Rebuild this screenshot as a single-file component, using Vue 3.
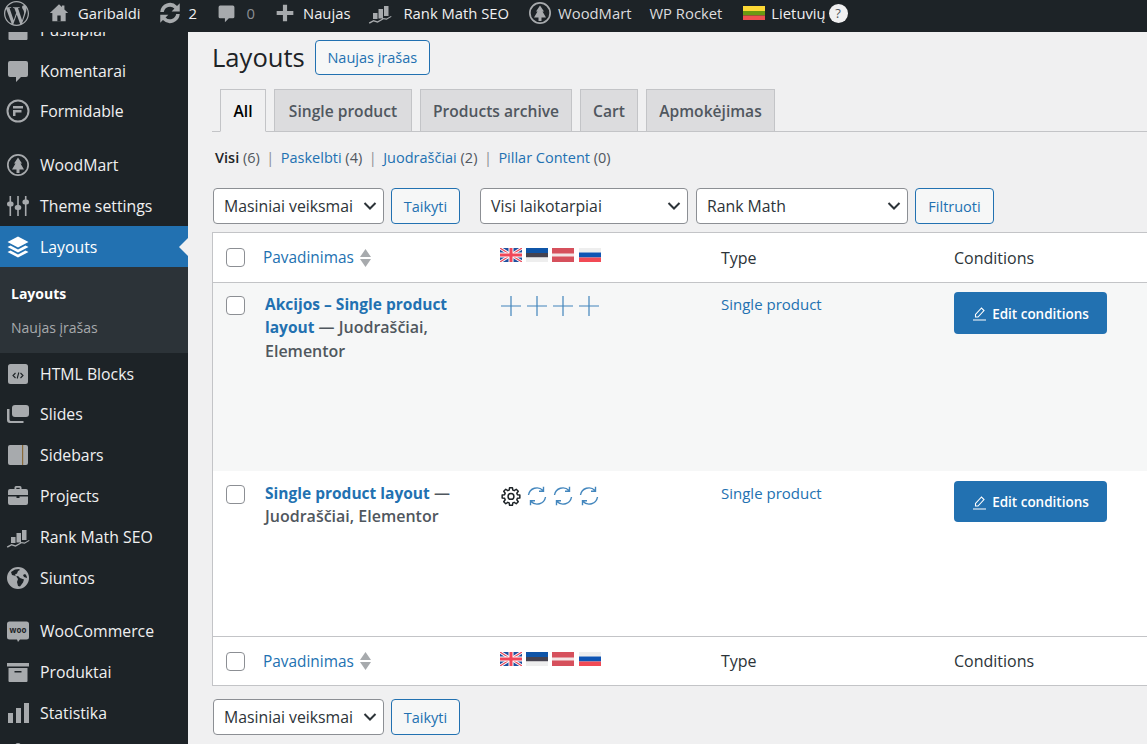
<template>
  <div class="page">
    <header class="topbar">
      <div class="bar-item logo">
        <svg class="bar-icon" width="25" height="25" viewBox="0 0 24 24"><path :d="icons.wp" /></svg>
      </div>
      <div v-for="item in barItems" :key="item.key" class="bar-item" :style="{ marginLeft: item.gap + 'px' }">
        <svg v-if="item.icon" class="bar-icon" :width="item.size" :height="item.size" viewBox="0 0 24 24">
          <path fill-rule="evenodd" :d="icons[item.icon]" />
          <path v-if="item.icon === 'home'" d="M10 15h4v7h-4z" class="door" />
        </svg>
        <span v-if="item.text" class="bar-text" :class="item.tone" :style="{ marginLeft: item.textGap + 'px' }">{{ item.text }}</span>
      </div>
      <svg class="lt-flag" width="22" height="14" viewBox="0 0 22 14">
        <rect width="22" height="5" fill="#fdd835" /><rect y="5" width="22" height="4.5" fill="#6a9a12" /><rect y="9.5" width="22" height="4.5" fill="#ef4f4f" />
      </svg>
      <span class="bar-text lang">Lietuvių</span>
      <span class="help">?</span>
    </header>

    <div class="shell">
      <nav class="sidebar">
        <div class="menu">
          <template v-for="item in menu" :key="item.icon + item.label">
            <div class="menu-item" :class="{ active: item.active, spaced: item.spaced }">
              <svg class="menu-icon" width="24" height="24" viewBox="0 0 24 24">
                <path fill-rule="evenodd" :d="icons[item.icon]" />
                <path v-if="item.icon === 'sidebars'" d="M16 2h1.200v20H16z" fill="#8a6a3a" />
                <path v-if="item.icon === 'html'" d="M9.500 11 7 13.500 9.500 16M14.500 11l2.500 2.500L14.500 16M12.800 10.500l-1.600 6" class="code" />
                <text v-if="item.icon === 'woo'" x="12" y="13.500" class="woo">woo</text>
              </svg>
              <span>{{ item.label }}</span>
            </div>
            <div v-if="item.active" class="submenu">
              <div class="sub current">Layouts</div>
              <div class="sub">Naujas įrašas</div>
            </div>
          </template>
        </div>
      </nav>

      <main class="content">
        <div class="title-row">
          <h1>Layouts</h1>
          <span class="add-new">Naujas įrašas</span>
        </div>

        <div class="tabs">
          <span v-for="tab in tabs" :key="tab.label" class="tab" :class="{ on: tab.label === 'All' }" :style="{ width: tab.width + 'px' }">{{ tab.label }}</span>
        </div>

        <div class="views">
          <span class="view strong">Visi <i>(6)</i></span><b>|</b>
          <span class="view"><a>Paskelbti</a> <i>(4)</i></span><b>|</b>
          <span class="view"><a>Juodraščiai</a> <i>(2)</i></span><b>|</b>
          <span class="view"><a>Pillar Content</a> <i>(0)</i></span>
        </div>

        <div class="filters">
          <div class="select w171"><span>Masiniai veiksmai</span><svg width="14" height="8" viewBox="0 0 14 8"><path d="M1.500 1 7 6.500 12.500 1" /></svg></div>
          <span class="btn w69">Taikyti</span>
          <div class="select w208"><span>Visi laikotarpiai</span><svg width="14" height="8" viewBox="0 0 14 8"><path d="M1.500 1 7 6.500 12.500 1" /></svg></div>
          <div class="select w212"><span>Rank Math</span><svg width="14" height="8" viewBox="0 0 14 8"><path d="M1.500 1 7 6.500 12.500 1" /></svg></div>
          <span class="btn w79">Filtruoti</span>
        </div>

        <div class="table">
          <div class="row head">
            <input type="checkbox" class="check" />
            <div class="sort"><a>Pavadinimas</a><svg width="11" height="18" viewBox="0 0 11 18"><path d="M5.500 0 11 8H0zM0 10h11l-5.500 8z" /></svg></div>
            <div class="flags">
              <svg v-for="f in flags" :key="f" class="flag" width="22" height="14" viewBox="0 0 22 14"><use :href="'#flag-' + f" /></svg>
            </div>
            <div class="col">Type</div>
            <div class="col">Conditions</div>
          </div>

          <div class="row body alt">
            <input type="checkbox" class="check" />
            <div class="name"><a>Akcijos – Single product layout</a> — Juodraščiai, Elementor</div>
            <div class="status">
              <svg v-for="f in flags" :key="f" width="20" height="20" viewBox="0 0 20 20"><path d="M10 0v20M0 10h20" class="line" /></svg>
            </div>
            <a class="type">Single product</a>
            <div><span class="edit"><svg width="15" height="15" viewBox="0 0 15 15"><path d="M1 14h13M3.500 11V8.500l6-6.500 2.500 2.500-6 6.500z" /></svg>Edit conditions</span></div>
          </div>

          <div class="row body second">
            <input type="checkbox" class="check" />
            <div class="name"><a>Single product layout</a> — Juodraščiai, Elementor</div>
            <div class="status">
              <svg width="20" height="20" viewBox="0 0 24 24"><path d="M10.300 2h3.400l.5 2.900 1.700.7 2.400-1.700 2.400 2.400-1.700 2.400.7 1.700 2.900.5v3.400l-2.900.5-.7 1.700 1.700 2.400-2.400 2.400-2.400-1.700-1.700.7-.5 2.900h-3.400l-.5-2.900-1.700-.7-2.400 1.700-2.400-2.400 1.700-2.400-.7-1.700-2.900-.5v-3.400l2.900-.5.7-1.700-1.700-2.400 2.400-2.400 2.400 1.700 1.700-.7z" class="gear" /><circle cx="12" cy="12.500" r="3.500" class="gear" /></svg>
              <svg v-for="n in 3" :key="n" width="20" height="20" viewBox="0 0 20 20"><path d="M1.500 9A8.500 8.500 0 0 1 16 4.500M18.500 11A8.500 8.500 0 0 1 4 15.500M16.500 .8V5.300H12M3.500 19.200V14.700H8" class="line thin" /></svg>
            </div>
            <a class="type">Single product</a>
            <div><span class="edit"><svg width="15" height="15" viewBox="0 0 15 15"><path d="M1 14h13M3.500 11V8.500l6-6.500 2.500 2.500-6 6.500z" /></svg>Edit conditions</span></div>
          </div>

          <div class="row foot">
            <input type="checkbox" class="check" />
            <div class="sort"><a>Pavadinimas</a><svg width="11" height="18" viewBox="0 0 11 18"><path d="M5.500 0 11 8H0zM0 10h11l-5.500 8z" /></svg></div>
            <div class="flags">
              <svg v-for="f in flags" :key="f" class="flag" width="22" height="14" viewBox="0 0 22 14"><use :href="'#flag-' + f" /></svg>
            </div>
            <div class="col">Type</div>
            <div class="col">Conditions</div>
          </div>
        </div>

        <div class="filters bottom">
          <div class="select w171"><span>Masiniai veiksmai</span><svg width="14" height="8" viewBox="0 0 14 8"><path d="M1.500 1 7 6.500 12.500 1" /></svg></div>
          <span class="btn w69">Taikyti</span>
        </div>
      </main>
    </div>

    <svg class="defs" width="0" height="0">
      <defs>
        <g id="flag-en">
          <rect width="22" height="14" fill="#1f4f9e" />
          <path d="M0 0l22 14M22 0 0 14" stroke="#fff" stroke-width="3" />
          <path d="M0 0l22 14M22 0 0 14" stroke="#e8475a" stroke-width="1.200" />
          <path d="M11 0v14M0 7h22" stroke="#fff" stroke-width="5" />
          <path d="M11 0v14M0 7h22" stroke="#f0475a" stroke-width="3" />
        </g>
        <g id="flag-ee">
          <rect width="22" height="5" fill="#0f55a8" /><rect y="5" width="22" height="4.500" fill="#46434f" /><rect y="9.500" width="22" height="4.500" fill="#eeeeee" />
        </g>
        <g id="flag-lv">
          <rect width="22" height="14" fill="#d6505c" /><rect y="5.500" width="22" height="3" fill="#f3e6e6" />
        </g>
        <g id="flag-ru">
          <rect width="22" height="4.500" fill="#eeeeee" /><rect y="4.500" width="22" height="5" fill="#0f55b4" /><rect y="9.500" width="22" height="4.500" fill="#f24a55" />
        </g>
      </defs>
    </svg>
  </div>
</template>

<script setup>
const icons = {
  wp: 'M21.469 6.825c.84 1.537 1.318 3.3 1.318 5.175 0 3.979-2.156 7.456-5.363 9.325l3.295-9.527c.615-1.54.82-2.771.82-3.864 0-.405-.026-.78-.07-1.11m-7.981.105c.647-.03 1.232-.105 1.232-.105.582-.075.514-.93-.067-.899 0 0-1.755.135-2.88.135-1.064 0-2.85-.15-2.85-.15-.585-.03-.661.855-.075.885 0 0 .54.061 1.125.09l1.68 4.605-2.37 7.08L5.354 6.9c.649-.03 1.234-.1 1.234-.1.585-.075.516-.93-.065-.896 0 0-1.746.138-2.874.138-.2 0-.438-.008-.69-.015C4.911 3.15 8.235 1.215 12 1.215c2.809 0 5.365 1.072 7.286 2.833-.046-.003-.091-.009-.141-.009-1.06 0-1.812.923-1.812 1.914 0 .89.513 1.643 1.06 2.531.411.72.89 1.643.89 2.977 0 .915-.354 1.994-.821 3.479l-1.075 3.585-3.9-11.61.001.014zM12 22.784c-1.059 0-2.081-.153-3.048-.437l3.237-9.406 3.315 9.087c.024.053.05.101.078.149-1.12.393-2.325.609-3.582.609M1.211 12c0-1.564.336-3.05.935-4.39L7.29 21.709C3.694 19.96 1.212 16.271 1.211 12M12 0C5.385 0 0 5.385 0 12s5.385 12 12 12 12-5.385 12-12S18.615 0 12 0',
  home: 'M12 1.500 1 12h3v10h16V12h3l-4.500-4.300V3h-3v1.900z',
  updates: 'M3 11a9 9 0 0 1 15.500-5.500L21 3v7.500h-7.500l2.600-2.600A5.800 5.800 0 0 0 6.300 11zM21 13a9 9 0 0 1-15.500 5.500L3 21v-7.500h7.500l-2.600 2.600a5.800 5.800 0 0 0 9.800-3.100z',
  comment: 'M4 2h16a2 2 0 0 1 2 2v12a2 2 0 0 1-2 2h-5l-5 5v-5H4a2 2 0 0 1-2-2V4a2 2 0 0 1 2-2z',
  plus: 'M9.500 2h5v7.500H22v5h-7.500V22h-5v-7.500H2v-5h7.500z',
  rank: 'M5 12h4.500v6H5zM10.500 8H15v9.500h-4.500zM16 5h4.500v10H16zM.8 21.500 5.500 19l4 1.300 6-3.300 3 .5 4.500-2.500.6.800-5 3-3-.5-6 3.500-4-1.300-4 2.200z',
  wood: 'M12 1a11 11 0 1 1 0 22 11 11 0 0 1 0-22zm0 1.700a9.300 9.300 0 1 0 0 18.600 9.300 9.300 0 0 0 0-18.600zM12 4.500l4 6h-1.500l3.500 6h-4.500v3.500h-3v-3.500H6l3.500-6H8z',
  formidable: 'M12 .5a11.500 11.500 0 1 1 0 23 11.500 11.500 0 0 1 0-23zm0 2a9.500 9.500 0 1 0 0 19 9.500 9.500 0 0 0 0-19zM7 7h10v2.500H7zM7 11h8.500v2.500H9.500V17H7z',
  sliders: 'M3.500 2h1.600v5.500a2.400 2.400 0 0 1 0 5V22H3.500v-9.500a2.400 2.400 0 0 1 0-5zM11.200 2h1.600v9a2.400 2.400 0 0 1 0 5v6h-1.600v-6a2.400 2.400 0 0 1 0-5zM18.900 2h1.600v3.500a2.400 2.400 0 0 1 0 5V22h-1.600V10.500a2.400 2.400 0 0 1 0-5z',
  layers: 'M12 1.500 22.500 7 12 12.500 1.500 7zM4.500 10.500 12 14.500l7.500-4 3 1.500L12 17.500 1.500 12zM4.500 15.500 12 19.500l7.500-4 3 1.500L12 22.500 1.500 17z',
  html: 'M4.500 2h15a2.500 2.500 0 0 1 2.500 2.500V19.500a2.500 2.500 0 0 1-2.500 2.500h-15A2.500 2.500 0 0 1 2 19.500V4.500A2.500 2.500 0 0 1 4.500 2z',
  slides: 'M9 3h11a3 3 0 0 1 3 3v6a3 3 0 0 1-3 3H9a3 3 0 0 1-3-3V6a3 3 0 0 1 3-3zM1 7h2.500v10.500a1.500 1.500 0 0 0 1.500 1.500H17.500v2H4a3 3 0 0 1-3-3z',
  sidebars: 'M4 2h16a2 2 0 0 1 2 2v16a2 2 0 0 1-2 2H4a2 2 0 0 1-2-2V4a2 2 0 0 1 2-2z',
  projects: 'M8.500 5V3.500A1.500 1.500 0 0 1 10 2h4a1.500 1.500 0 0 1 1.500 1.500V5H20a2 2 0 0 1 2 2v4H2V7a2 2 0 0 1 2-2zm1.800 0h3.400V3.800h-3.400zM2 12.500h8.500v1.500h3v-1.500H22V19a2 2 0 0 1-2 2H4a2 2 0 0 1-2-2z',
  globe: 'M12 1a11 11 0 1 1 0 22 11 11 0 0 1 0-22zM9 3.500 5 6l1 3 4 1 2 3-1 3 1 4 2 .5 3-4 1-3-4-1.500-2-2-2 .5-1-2 2-1 1-2.500 1.500-.8L13.500 3zM19 8l-2 1 1 2 3 1c0-1.500-.8-3-2-4z',
  woo: 'M3.500 2.500h17A2.500 2.500 0 0 1 23 5v13a2.500 2.500 0 0 1-2.500 2.500H14L12 23l-1-2.500H3.500A2.500 2.500 0 0 1 1 18V5a2.500 2.500 0 0 1 2.500-2.500z',
  box: 'M1 3h22v3.500H1zM2.500 8h19v13a1 1 0 0 1-1 1h-17a1 1 0 0 1-1-1zm6 3v1.500h7V11z',
  bars: 'M2 12h5v10H2zM10 7h5v15h-5zM18 2h5v20h-5z',
  mega: 'M12 1a3 3 0 0 1 3 3v10H9V4a3 3 0 0 1 3-3z'
}

const barItems = [
  { key: 'home', icon: 'home', size: 20, gap: 20, text: 'Garibaldi', textGap: 9 },
  { key: 'updates', icon: 'updates', size: 26, gap: 16, text: '2', textGap: 6 },
  { key: 'comments', icon: 'comment', size: 19, gap: 19.5, text: '0', textGap: 11, tone: 'dim' },
  { key: 'new', icon: 'plus', size: 20, gap: 19.5, text: 'Naujas', textGap: 8.5 },
  { key: 'rank', icon: 'rank', size: 24, gap: 17.5, text: 'Rank Math SEO', textGap: 11.5 },
  { key: 'wood', icon: 'wood', size: 24, gap: 18.5, text: 'WoodMart', textGap: 6.5, tone: 'soft' },
  { key: 'rocket', gap: 18, text: 'WP Rocket', textGap: 0, tone: 'soft' }
]

const menu = [
  { label: 'Puslapiai', icon: 'box' },
  { label: 'Komentarai', icon: 'comment' },
  { label: 'Formidable', icon: 'formidable' },
  { label: 'WoodMart', icon: 'wood', spaced: true },
  { label: 'Theme settings', icon: 'sliders' },
  { label: 'Layouts', icon: 'layers', active: true },
  { label: 'HTML Blocks', icon: 'html' },
  { label: 'Slides', icon: 'slides' },
  { label: 'Sidebars', icon: 'sidebars' },
  { label: 'Projects', icon: 'projects' },
  { label: 'Rank Math SEO', icon: 'rank' },
  { label: 'Siuntos', icon: 'globe' },
  { label: 'WooCommerce', icon: 'woo', spaced: true },
  { label: 'Produktai', icon: 'box' },
  { label: 'Statistika', icon: 'bars' },
  { label: '', icon: 'mega' }
]

const tabs = [
  { label: 'All', width: 46 },
  { label: 'Single product', width: 138 },
  { label: 'Products archive', width: 152 },
  { label: 'Cart', width: 58 },
  { label: 'Apmokėjimas', width: 129 }
]
const flags = ['en', 'ee', 'lv', 'ru']
</script>

<style>
html, body { margin: 0; background: #f0f0f1; overflow: hidden; }
</style>

<style scoped>
.page {
  width: 1147px;
  height: 744px;
  overflow: hidden;
  background: #f0f0f1;
  font-family: "Open Sans", "Noto Sans", sans-serif;
  font-size: 15px;
  color: #3c434a;
}
.defs { position: absolute; }

/* top bar */
.topbar {
  height: 32px;
  box-sizing: border-box;
  padding: 0 0 6px 4px;
  display: flex;
  align-items: center;
  background: #1d2327;
  position: relative;
  z-index: 2;
}
.bar-item { display: flex; align-items: center; }
.bar-icon { fill: #a7aaad; flex: none; }
.door { fill: #1d2327; }
.bar-text { color: #f0f0f1; white-space: nowrap; font-size: 14.800px; }
.bar-text.dim { color: #8c8f94; }
.bar-text.soft { color: #dcdcde; }
.lt-flag { margin-left: 21px; }
.lang { margin-left: 6px; }
.help {
  width: 19px;
  height: 19px;
  margin-left: 3px;
  border-radius: 50%;
  background: #f0f0f1;
  color: #50575e;
  font-size: 13px;
  line-height: 19px;
  text-align: center;
}

.shell { display: flex; height: 712px; overflow: hidden; }

/* sidebar */
.sidebar { width: 188px; flex: none; background: #1d2327; }
.menu { margin-top: -22.500px; }
.menu-item {
  height: 40.800px;
  display: flex;
  align-items: center;
  gap: 10px;
  padding-left: 6px;
  color: #f0f0f1;
  font-size: 15.800px;
  white-space: nowrap;
  position: relative;
}
.menu-item.spaced { margin-top: 13px; }
.menu-icon { fill: #a7aaad; flex: none; }
.menu-item.active { background: #2271b1; color: #fff; }
.menu-item.active .menu-icon { fill: #fff; }
.menu-item.active::after {
  content: "";
  position: absolute;
  right: 0;
  top: 50%;
  margin-top: -9px;
  border: 9px solid transparent;
  border-left-width: 0;
  border-right-color: #f0f0f1;
}
.code { fill: none; stroke: #1d2327; stroke-width: 1.100; }
.woo { fill: #1d2327; font-size: 8px; font-weight: 700; text-anchor: middle; }
.submenu { height: 86px; box-sizing: border-box; padding-top: 10px; background: #2c3338; }
.sub { height: 33.500px; line-height: 33.500px; padding-left: 11px; color: #a7aaad; font-size: 14px; }
.sub.current { color: #fff; font-weight: 700; }

/* content */
.content { flex: 1; min-width: 0; padding: 8px 0 0 25px; overflow: hidden; }
.title-row { display: flex; align-items: center; gap: 10px; height: 35px; margin-left: -1px; }
h1 { margin: 0; font-size: 25.600px; font-weight: 400; color: #1d2327; line-height: 35px; }
.add-new {
  width: 115px;
  height: 35px;
  box-sizing: border-box;
  display: flex;
  align-items: center;
  justify-content: center;
  border: 1px solid #2271b1;
  border-radius: 4px;
  background: #f6f7f7;
  color: #2271b1;
  font-size: 14.500px;
}
.tabs {
  display: flex;
  gap: 8px;
  height: 43px;
  box-sizing: border-box;
  margin: 14px 0 0 -1px;
  padding-left: 8px;
  border-bottom: 1px solid #c3c4c7;
}
.tab {
  height: 43px;
  box-sizing: border-box;
  display: flex;
  align-items: center;
  justify-content: center;
  border: 1px solid #c3c4c7;
  background: #dcdcde;
  color: #50575e;
  font-size: 15.600px;
  font-weight: 600;
  white-space: nowrap;
}
.tab.on { background: #f0f0f1; border-bottom-color: #f0f0f1; color: #000; }

.views { display: flex; gap: 6.500px; margin: 14px 0 0 2px; height: 22px; align-items: center; font-size: 14.500px; color: #50575e; }
.views a { color: #2271b1; }
.views i { font-style: normal; color: #50575e; }
.views b { font-weight: 400; color: #8c8f94; }
.view.strong { color: #1d2327; font-weight: 600; }
.view.strong i { font-weight: 400; }

.filters { display: flex; align-items: center; gap: 7px; height: 36px; margin-top: 20px; }
.filters.bottom { margin-top: 13px; }
.select {
  height: 36px;
  box-sizing: border-box;
  padding: 0 6px 0 10px;
  display: flex;
  align-items: center;
  justify-content: space-between;
  background: #fff;
  border: 1px solid #8c8f94;
  border-radius: 4px;
  color: #2c3338;
  font-size: 15.800px;
  white-space: nowrap;
}
.select svg { fill: none; stroke: #2c3338; stroke-width: 2; flex: none; }
.btn {
  height: 36px;
  box-sizing: border-box;
  display: flex;
  align-items: center;
  justify-content: center;
  border: 1px solid #2271b1;
  border-radius: 4px;
  background: #f6f7f7;
  color: #2271b1;
  font-size: 14.500px;
}
.w171 { width: 171px; }
.w208 { width: 208px; margin-left: 13px; }
.w212 { width: 212px; margin-left: 1px; }
.w69 { width: 69px; }
.w79 { width: 79px; }

.table {
  width: 960px;
  margin: 8px 0 0 -1px;
  border: 1px solid #c3c4c7;
  background: #fff;
}
.row {
  display: grid;
  grid-template-columns: 50px 236px 222px 233px 1fr;
  box-sizing: border-box;
}
.head { height: 50px; align-items: center; border-bottom: 1px solid #c3c4c7; }
.foot { height: 49px; align-items: center; border-top: 1px solid #c3c4c7; }
.body { align-items: start; }
.alt { height: 188px; padding-top: 10px; background: #f6f7f7; }
.second { height: 165px; padding-top: 11px; background: #fff; }
.check {
  appearance: none;
  width: 19px;
  height: 19px;
  margin: 0 0 0 13px;
  border: 1px solid #8c8f94;
  border-radius: 4px;
  background: #fff;
}
.body .check { margin-top: 3px; }
.sort { display: flex; align-items: center; gap: 6px; font-size: 15.400px; }
.sort a { color: #2271b1; }
.sort svg { fill: #a7aaad; }
.flags { display: flex; gap: 4.200px; margin: -5px 0 0 1px; }
.flag { display: block; }
.col { font-size: 16px; color: #2c3338; }
.foot .col { margin-top: -1px; }
.name {
  width: 205px;
  margin: 0 0 0 2px;
  font-size: 16px;
  line-height: 23.400px;
  font-weight: 600;
  color: #50575e;
}
.name a { color: #2271b1; font-size: 15.500px; font-weight: 700; }
.status { display: flex; gap: 6px; padding: 3px 0 0 2px; }
.second .status { padding-top: 4px; }
.status svg { display: block; flex: none; }
.line { fill: none; stroke: #2271b1; stroke-width: 1.200; opacity: .85; }
.line.thin { stroke-width: 1.400; }
.gear { fill: none; stroke: #1d2327; stroke-width: 1.800; stroke-linejoin: round; }
.type { color: #2271b1; font-size: 15px; line-height: 23px; }
.edit {
  width: 153px;
  height: 42px;
  box-sizing: border-box;
  padding-top: 1px;
  margin-top: -1px;
  display: inline-flex;
  align-items: center;
  justify-content: center;
  gap: 5px;
  border-radius: 4px;
  background: #2271b1;
  color: #fff;
  font-size: 13.500px;
  font-weight: 600;
  white-space: nowrap;
}
.second .edit { height: 41px; }
.edit svg { fill: none; stroke: #fff; stroke-width: 1.100; }
</style>
